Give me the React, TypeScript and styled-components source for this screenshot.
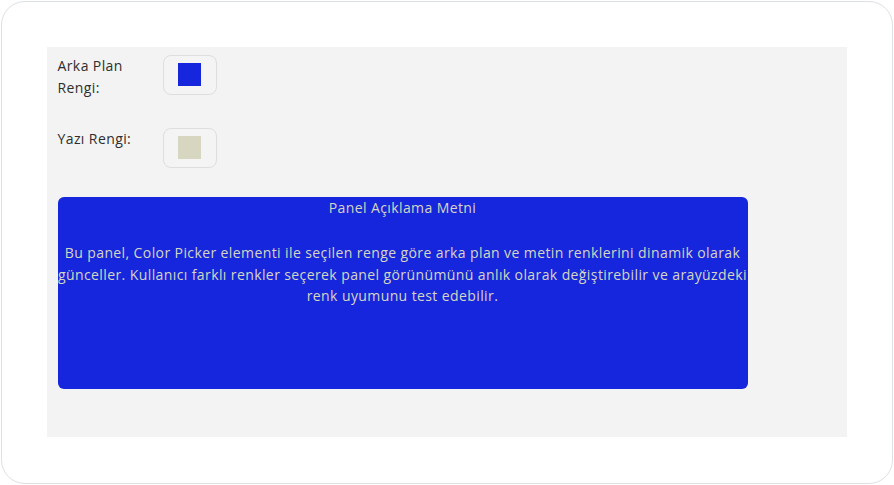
import React, { useState } from 'react';
import styled, { createGlobalStyle } from 'styled-components';

const GlobalStyle = createGlobalStyle`
  html, body {
    margin: 0;
    padding: 0;
    background: #ffffff;
  }
  body {
    font-family: "Open Sans", "Liberation Sans", sans-serif;
  }
`;

function App() {
  const [bgColor] = useState('#1526dd');
  const [textColor] = useState('#d6d6c1');

  return (
    <>
      <GlobalStyle />
      <Frame>
        <Stage>
          <Row>
            <Label>Arka Plan Rengi:</Label>
            <Swatch>
              <SwatchColor $color={bgColor} />
            </Swatch>
          </Row>
          <Row>
            <Label>Yazı Rengi:</Label>
            <Swatch>
              <SwatchColor $color={textColor} />
            </Swatch>
          </Row>
          <Panel $bg={bgColor} $fg={textColor}>
            <PanelTitle>Panel Açıklama Metni</PanelTitle>
            <PanelText>
              Bu panel, Color Picker elementi ile seçilen renge göre arka plan ve metin renklerini
              dinamik olarak günceller. Kullanıcı farklı renkler seçerek panel görünümünü anlık
              olarak değiştirebilir ve arayüzdeki renk uyumunu test edebilir.
            </PanelText>
          </Panel>
        </Stage>
      </Frame>
    </>
  );
}

const Frame = styled.div`
  box-sizing: border-box;
  margin: 1px;
  width: 892px;
  height: 483px;
  border: 1.5px solid #dde0e4;
  border-radius: 24px;
  background: #ffffff;
  padding: 44.5px 0 0 44.5px;
`;

const Stage = styled.div`
  box-sizing: border-box;
  width: 800px;
  height: 390px;
  background: #f3f3f3;
  padding: 8px 11px 0 11px;
`;

const Row = styled.div`
  display: flex;
  align-items: flex-start;
  margin-bottom: 29px;
`;

const Label = styled.div`
  width: 96px;
  margin-right: 9px;
  font-size: 14px;
  line-height: 22px;
  letter-spacing: 0.4px;
  color: #2e2e2e;
`;

const Swatch = styled.div`
  box-sizing: border-box;
  width: 54px;
  height: 40px;
  border: 1px solid #dedede;
  border-radius: 8px;
  background: #f4f4f4;
  display: flex;
  align-items: center;
  justify-content: center;
`;

const SwatchColor = styled.div<{ $color: string }>`
  width: 23px;
  height: 23px;
  background: ${p => p.$color};
`;

const Panel = styled.div<{ $bg: string; $fg: string }>`
  box-sizing: border-box;
  width: 690px;
  height: 192px;
  border-radius: 6px;
  background: ${p => p.$bg};
  color: ${p => p.$fg};
  text-align: center;
  font-size: 14px;
  line-height: 21.5px;
  letter-spacing: 0.4px;
`;

const PanelTitle = styled.div`
  margin-bottom: 24px;
`;

const PanelText = styled.p`
  margin: 0;
`;

export default App;
